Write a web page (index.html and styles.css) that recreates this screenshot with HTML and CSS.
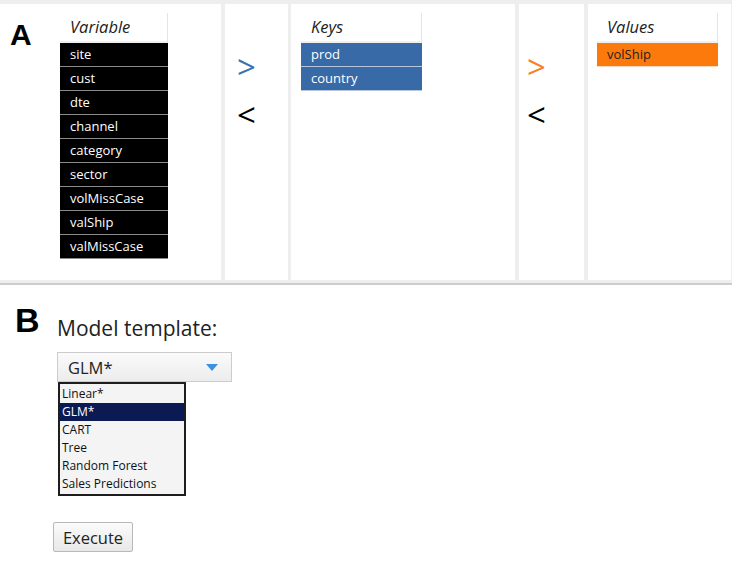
FILE: index.html
```html
<!DOCTYPE html>
<html lang="en">
<head>
    <meta charset="UTF-8">
    <meta name="viewport" content="width=device-width, initial-scale=1.0">
    <title>Model builder</title>
    <link rel="stylesheet" href="styles.css">
</head>
<body>
    <div class="pipeline">
        <div class="panel panel-vars">
            <div class="label label-a">A</div>
            <div class="list list-vars">
                <div class="list-head">Variable</div>
                <div class="item">site</div>
                <div class="item">cust</div>
                <div class="item">dte</div>
                <div class="item">channel</div>
                <div class="item">category</div>
                <div class="item">sector</div>
                <div class="item">volMissCase</div>
                <div class="item">valShip</div>
                <div class="item">valMissCase</div>
            </div>
        </div>

        <div class="panel panel-move">
            <div class="move move-add blue">&gt;</div>
            <div class="move">&lt;</div>
        </div>

        <div class="panel panel-keys">
            <div class="list list-keys">
                <div class="list-head">Keys</div>
                <div class="item">prod</div>
                <div class="item">country</div>
            </div>
        </div>

        <div class="panel panel-move panel-move2">
            <div class="move move-add orange">&gt;</div>
            <div class="move">&lt;</div>
        </div>

        <div class="panel panel-values">
            <div class="list list-values">
                <div class="list-head">Values</div>
                <div class="item">volShip</div>
            </div>
        </div>
    </div>

    <div class="model">
        <div class="label label-b">B</div>
        <div class="model-body">
            <div class="model-title">Model template:</div>
            <div class="select">
                <span>GLM*</span>
                <svg class="caret" width="12" height="7" viewBox="0 0 12 7"><path d="M0 0 L12 0 L6 7 Z" fill="#3d8fe0"/></svg>
            </div>
            <ul class="options">
                <li>Linear*</li>
                <li class="selected">GLM*</li>
                <li>CART</li>
                <li>Tree</li>
                <li>Random Forest</li>
                <li>Sales Predictions</li>
            </ul>
            <button class="execute">Execute</button>
        </div>
    </div>
</body>
</html>
```

FILE: styles.css
```css
body {
    margin: 0;
    font-family: "Open Sans", "Noto Sans", sans-serif;
    background-color: white;
    color: #222;
}
.pipeline {
    display: flex;
    padding: 4px 1px 3px 0;
    background-color: #eeeeee;
    border-bottom: 2px solid #cccccc;
}
.panel {
    height: 276px;
    background-color: white;
    box-sizing: border-box;
}
.panel-vars {
    width: 221px;
    display: flex;
    padding: 9px 0 0 10px;
}
.panel-move {
    width: 63px;
    margin: 0 3px 0 4px;
    padding: 46px 0 0 12px;
}
.panel-move2 {
    width: 65px;
    margin: 0 4px;
    padding-left: 8px;
}
.panel-keys {
    width: 224px;
    padding: 9px 0 0 10px;
}
.panel-values {
    width: 143px;
    padding: 9px 0 0 9px;
}
.label {
    font-family: "Liberation Sans", Arial, sans-serif;
    font-weight: bold;
    color: black;
}
.label-a {
    width: 50px;
    font-size: 30px;
    line-height: 1;
    padding-top: 7px;
}
.list {
    width: 108px;
}
.list-keys, .list-values {
    width: 121px;
}
.list-head {
    height: 28px;
    line-height: 28px;
    padding-left: 10px;
    font-size: 16.5px;
    font-style: italic;
    border-right: 1px solid #e4e4e4;
    border-bottom: 2px solid #f0f0f0;
}
.item {
    height: 23px;
    line-height: 22px;
    padding-left: 10px;
    font-size: 13px;
    color: white;
    border-bottom: 1px solid #8a8a8a;
}
.list-vars .item {
    background-color: black;
}
.list-keys .item {
    background-color: #386aa8;
    border-bottom-color: #b7c6dc;
}
.list-values .item {
    background-color: #fc7a0c;
    color: #222;
    border-bottom-color: #f8d9bd;
}
.move {
    font-size: 33px;
    line-height: 1;
    height: 48px;
    color: black;
}
.blue {
    color: #3a70b4;
}
.orange {
    color: #f7802a;
}
.model {
    display: flex;
    padding: 18px 0 0 15px;
}
.label-b {
    width: 42px;
    font-size: 34px;
    line-height: 1;
}
.model-body {
    padding-top: 12px;
}
.model-title {
    font-size: 21px;
    line-height: 26px;
    margin-bottom: 11px;
}
.select {
    width: 175px;
    height: 30px;
    box-sizing: border-box;
    display: flex;
    align-items: center;
    justify-content: space-between;
    padding: 0 13px 0 10px;
    border: 1px solid #cccccc;
    background: linear-gradient(#fafafa, #ececec);
    font-size: 16.5px;
}
.caret {
    display: block;
}
.options {
    list-style: none;
    width: 128px;
    margin: 0 0 0 1px;
    padding: 1px 0;
    box-sizing: border-box;
    border: 2px solid #1e1e1e;
    background-color: #f4f4f4;
    font-size: 12px;
    color: #111;
}
.options li {
    height: 18px;
    line-height: 18px;
    padding-left: 2px;
}
.options .selected {
    background-color: #0b1a52;
    color: white;
}
.execute {
    margin: 26px 0 0 -4px;
    width: 80px;
    height: 30px;
    padding: 0;
    font-family: "Open Sans", "Noto Sans", sans-serif;
    font-size: 16.5px;
    color: #222;
    border: 1px solid #b8b8b8;
    border-radius: 2px;
    background: linear-gradient(#fbfbfb, #e8e8e8);
}
```
